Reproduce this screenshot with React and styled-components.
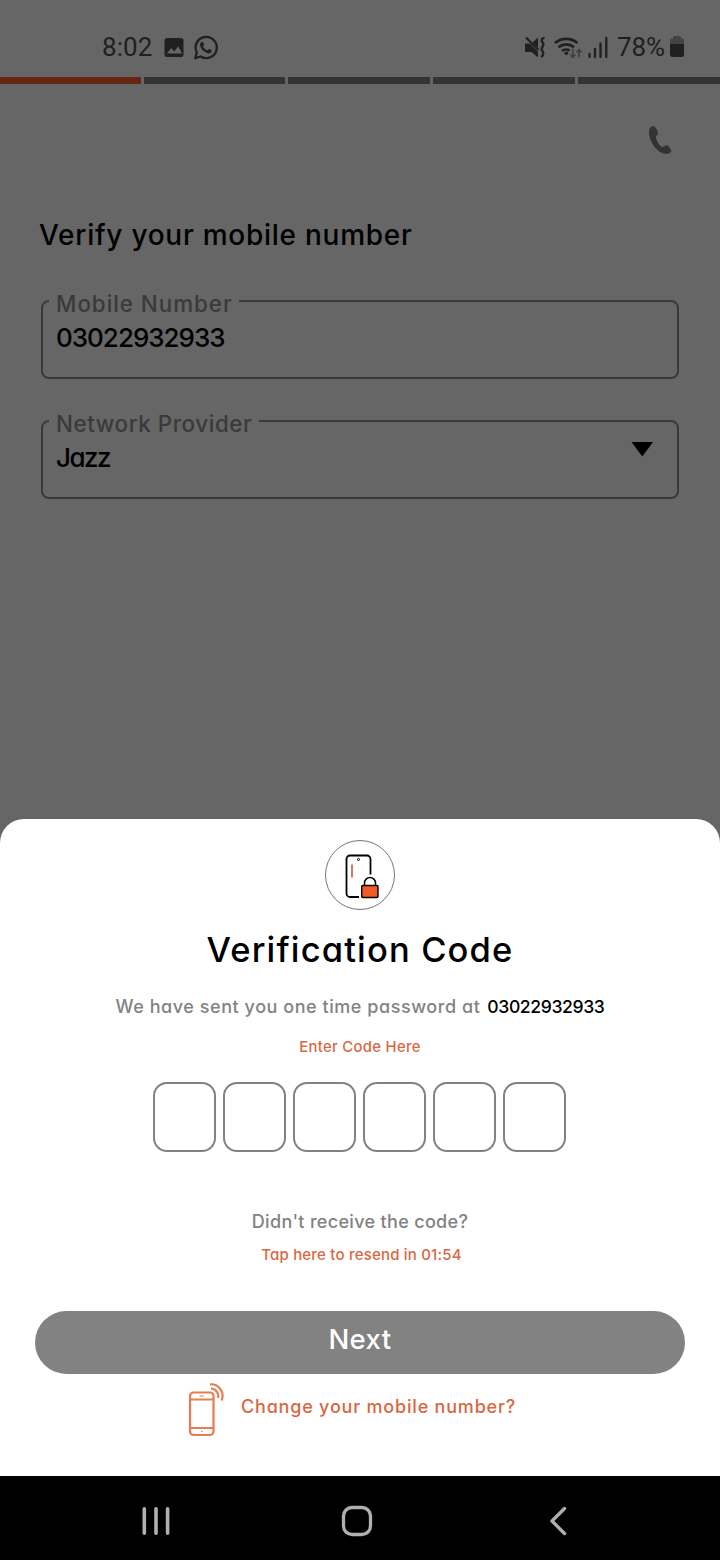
import React from "react";
import styled, { createGlobalStyle } from "styled-components";

const GlobalStyle = createGlobalStyle`
  * { box-sizing: border-box; }
  body { margin: 0; background: #666; }
`;

const Screen = styled.div`
  display: flex;
  flex-direction: column;
  width: 720px;
  height: 1560px;
  overflow: hidden;
  background: #666;
  font-family: Inter, "Open Sans", sans-serif;
  font-feature-settings: "cv11";
  font-weight: 500;
`;

const Text = styled.span`
  display: block;
  white-space: nowrap;
  color: ${(p) => p.$color || "#000"};
  font-size: ${(p) => p.$size}px;
  line-height: ${(p) => p.$line || 24}px;
  letter-spacing: ${(p) => p.$track || 0}px;
  font-weight: ${(p) => p.$weight || 500};
`;

const StatusBar = styled.header`
  display: flex;
  justify-content: space-between;
  align-items: center;
  height: 77px;
  padding: 17px 35px 0 102px;
  color: #202020;
  font-family: Roboto, sans-serif;
  font-weight: 400;
  font-size: 26px;
  line-height: 30px;
`;

const StatusGroup = styled.div`
  display: flex;
  align-items: center;
`;

const Clock = styled.span`
  width: 62px;
  letter-spacing: 0.1px;
`;

const Percent = styled.span`
  width: 52px;
  margin-left: 9px;
  letter-spacing: -0.1px;
`;

const Progress = styled.div`
  display: grid;
  grid-template-columns: 141px 141px 142px 142px 142px;
  gap: 3px;
  height: 7px;
`;

const Segment = styled.div`
  background: ${(p) => (p.$active ? "#662611" : "#343434")};
`;

const Form = styled.main`
  display: flex;
  flex-direction: column;
  height: 735px;
  padding: 40px 41px 0;
`;

const CallRow = styled.div`
  display: flex;
  justify-content: flex-end;
  height: 32px;
  padding-right: 6px;
`;

const FormTitle = styled(Text)`
  margin: 61px 0 0 -2px;
`;

const Field = styled.div`
  position: relative;
  display: flex;
  justify-content: space-between;
  align-items: flex-start;
  height: 79px;
  margin-top: ${(p) => p.$gap}px;
  padding: 20px 24px 0 13px;
  border: 2px solid #3a3a3a;
  border-radius: 8px;
`;

const FieldLabel = styled.div`
  position: absolute;
  top: -10px;
  left: 6px;
  width: ${(p) => p.$width}px;
  padding-left: 7px;
  background: #666;
`;

const Sheet = styled.section`
  display: flex;
  flex-direction: column;
  align-items: center;
  height: 657px;
  padding-top: 21px;
  background: #fff;
  border-radius: 24px 24px 0 0;
`;

const Badge = styled.div`
  display: flex;
  width: 70px;
  height: 70px;
  border: 1px solid #777;
  border-radius: 50%;
`;

const Message = styled.div`
  display: flex;
  gap: 7px;
  margin-top: 25px;
`;

const CodeRow = styled.div`
  display: flex;
  gap: 7px;
  margin: 25px 1px 0 0;
`;

const CodeBox = styled.div`
  width: 63px;
  height: 70px;
  border: 2px solid #828282;
  border-radius: 14px;
`;

const NextButton = styled.button`
  display: flex;
  justify-content: center;
  width: 650px;
  height: 63px;
  margin-top: 46px;
  padding: 10px 0 0;
  border: 0;
  border-radius: 32px;
  background: #828282;
  font: inherit;
  font-feature-settings: inherit;
`;

const ChangeLink = styled.div`
  display: flex;
  gap: 16px;
  width: 534px;
  margin: 8px 0 0;
  padding-left: 94px;
`;

const NavBar = styled.nav`
  display: flex;
  align-items: center;
  justify-content: space-between;
  height: 84px;
  padding: 6px 150px 0 140px;
  background: #000;
`;

const HomeSvg = styled.svg`
  margin-right: 6px;
`;

const Spaced = styled.div`
  margin-top: ${(p) => p.$top}px;
  padding-left: ${(p) => p.$left || 0}px;
`;

const ORANGE = "#d9673f";
const GRAY = "#828282";

const StatusLeftIcons = () => (
  <svg width="56" height="28" viewBox="0 0 56 28" fill="none">
    <rect x="0.5" y="5" width="19" height="19" rx="2.5" fill="#202020" />
    <path d="M3 20.5 7.2 15l3 3.5 4-5.3 4 7.3Z" fill="#666" />
    <g transform="translate(-1 0)">
      <path d="M32.200 25.200 33.800 19.400A10.600 10.600 0 1 1 37.600 23.500Z" stroke="#202020" strokeWidth="2.300" strokeLinejoin="round" />
      <path d="M38 9.300c.7-.8 1.700-.8 2.100 0l1 2.300c.2.600-.8 1.500-1 1.900.9 1.900 2.400 3.200 4.300 4 .6-.5 1.200-1.700 1.900-1.400l2.300 1.200c.6.500-.1 2-.8 2.500-1.700 1.300-4.500.3-6.500-1.200-2.100-1.500-4-4-4.200-6-.1-1.200.2-2.400.9-3.300Z" fill="#202020" />
    </g>
  </svg>
);

const StatusRightIcons = () => (
  <svg width="84" height="28" viewBox="0 0 84 28" fill="none">
    <path d="M1 10.500h4.700l8.300 8.300v5.700L7.500 19H1Z" fill="#202020" />
    <path d="M8.500 9.500 14 4.500V15Z" fill="#202020" />
    <path d="M2 4.500 14.500 17" stroke="#202020" strokeWidth="2.200" />
    <path d="M20.500 5c-3 0-3.500 2.500-2 4.300s1.500 2.700 0 4.400-1.500 2.700 0 4.400.8 5.400-1.700 5.400" stroke="#202020" strokeWidth="2.300" />
    <path d="M31 10a17.500 17.500 0 0 1 22.500 0M34.500 14.200a12 12 0 0 1 15.500 0M38 18a7 7 0 0 1 7.500-.5" stroke="#202020" strokeWidth="2.600" />
    <circle cx="42.300" cy="20.300" r="1.800" fill="#202020" />
    <path d="M48.800 16v8M46.300 21.500l2.500 3 2.500-3M55 24.500v-8M52.500 19.500l2.500-3 2.500 3" stroke="#404040" strokeWidth="1.700" />
    <path d="M65.500 21V24M71 16V24M76.500 10.500V24M82.300 5V24" stroke="#202020" strokeWidth="2.300" strokeLinecap="round" />
  </svg>
);

const BatteryIcon = () => (
  <svg width="16" height="24" viewBox="0 0 16 24">
    <path d="M5 1h6a1 1 0 0 1 1 1v1.500h1.500A1.500 1.500 0 0 1 15 5v5H1V5a1.500 1.500 0 0 1 1.500-1.500H4V2a1 1 0 0 1 1-1Z" fill="#434343" />
    <path d="M1 9h14v10.500a2.500 2.500 0 0 1-2.500 2.500h-9A2.500 2.500 0 0 1 1 19.500Z" fill="#202020" />
  </svg>
);

const CallIcon = () => (
  <svg width="26" height="32" viewBox="0 0 26 32">
    <path d="M5.200 2.200C3 3.100 2 5 2 8c0 9.500 8 21.500 17.500 22 2.700.1 4.800-1.200 4.800-3.200 0-1.300-2.700-5.400-4.700-5.500-1.900 0-2.700 1.900-4.300 1.700C12.900 22.700 9.300 16.400 8.900 13.500c-.2-1.700 2.200-2.300 2.100-4-.1-1.900-2-8-5.800-7.300Z" fill="#333" />
  </svg>
);

const LockPhoneIcon = () => (
  <svg width="68" height="68" viewBox="0 0 68 68" fill="none">
    <path d="M44.500 33.500V18a3.500 3.500 0 0 0-3.500-3.500H24a3.500 3.500 0 0 0-3.500 3.500v34.500A3.500 3.500 0 0 0 24 56h9" stroke="#000" strokeWidth="1.800" />
    <circle cx="32.500" cy="18.500" r="1" stroke="#000" />
    <path d="M26 23.500v13" stroke="#d5724c" strokeWidth="1.900" />
    <path d="M38.500 44.500v-2.500a5.500 5.500 0 0 1 11 0v2.500" stroke="#000" strokeWidth="1.500" />
    <rect x="35.700" y="44.500" width="16.300" height="12" rx="1" fill="#f15a24" stroke="#000" strokeWidth="1.400" />
  </svg>
);

const MobileSignalIcon = () => (
  <svg width="38" height="56" viewBox="0 0 38 56" fill="none" stroke="#e87b53" strokeWidth="2.200">
    <rect x="3" y="10.500" width="23.500" height="42.500" rx="3.500" />
    <path d="M3 17.500h23.500M3 46h23.500" />
    <path d="M12.500 14h4.500M14 49.500h1.500" strokeWidth="1.200" />
    <path d="M24 6.500a7.500 7.500 0 0 1 7 9.500M23 2.300a11.500 11.500 0 0 1 11.500 16.200" />
  </svg>
);

const RecentsIcon = () => (
  <svg width="32" height="32" viewBox="0 0 32 32" stroke="#b0b0b0" strokeWidth="3.600" strokeLinecap="round">
    <path d="M4.300 3.700v24.500M16 3.700v24.500M27.600 3.700v24.500" />
  </svg>
);

const HomeIcon = () => (
  <HomeSvg width="34" height="34" viewBox="0 0 34 34" fill="none" stroke="#b0b0b0" strokeWidth="3.300">
    <rect x="3.500" y="3.500" width="27" height="27" rx="8.500" />
  </HomeSvg>
);

const BackIcon = () => (
  <svg width="22" height="32" viewBox="0 0 22 32" fill="none" stroke="#b0b0b0" strokeWidth="3.300" strokeLinecap="round" strokeLinejoin="round">
    <path d="M16.500 3.500 4 16l12.500 12.500" />
  </svg>
);

export default function App() {
  return (
    <Screen>
      <GlobalStyle />
      <StatusBar>
        <StatusGroup>
          <Clock>8:02</Clock>
          <StatusLeftIcons />
        </StatusGroup>
        <StatusGroup>
          <StatusRightIcons />
          <Percent>78%</Percent>
          <BatteryIcon />
        </StatusGroup>
      </StatusBar>
      <Progress>
        {[0, 1, 2, 3, 4].map((i) => (
          <Segment key={i} $active={i === 0} />
        ))}
      </Progress>
      <Form>
        <CallRow>
          <CallIcon />
        </CallRow>
        <FormTitle $size={28} $line={36} $track={0.74}>Verify your mobile number</FormTitle>
        <Field $gap={47}>
          <FieldLabel $width={190}>
            <Text $size={22.4} $track={0.95} $color="#3a3a3a">Mobile Number</Text>
          </FieldLabel>
          <Text $size={26} $line={32} $track={-1}>03022932933</Text>
        </Field>
        <Field $gap={41}>
          <FieldLabel $width={210}>
            <Text $size={22.4} $track={0.57} $color="#3a3a3a">Network Provider</Text>
          </FieldLabel>
          <Text $size={26} $line={32} $track={-1.5}>Jazz</Text>
          <svg width="22" height="15" viewBox="0 0 22 15">
            <path d="M0.500 0H22L11.300 14.500Z" />
          </svg>
        </Field>
      </Form>
      <Sheet>
        <Badge>
          <LockPhoneIcon />
        </Badge>
        <Spaced $top={18}>
          <Text $size={34.5} $line={44} $track={1.15}>Verification Code</Text>
        </Spaced>
        <Message>
          <Text $size={18} $line={20} $track={0.55} $color={GRAY}>We have sent you one time password at</Text>
          <Text $size={17.6} $line={20} $track={-0.4}>03022932933</Text>
        </Message>
        <Spaced $top={20}>
          <Text $size={14.8} $line={20} $track={0.35} $color={ORANGE}>Enter Code Here</Text>
        </Spaced>
        <CodeRow>
          {[0, 1, 2, 3, 4, 5].map((i) => (
            <CodeBox key={i} />
          ))}
        </CodeRow>
        <Spaced $top={60}>
          <Text $size={18} $line={20} $track={0.32} $color={GRAY}>Didn't receive the code?</Text>
        </Spaced>
        <Spaced $top={13} $left={3}>
          <Text $size={15} $line={20} $track={0.2} $color={ORANGE}>Tap here to resend in 01:54</Text>
        </Spaced>
        <NextButton>
          <Text $size={27.5} $line={36} $track={0.4} $color="#fff">Next</Text>
        </NextButton>
        <ChangeLink>
          <MobileSignalIcon />
          <Spaced $top={15}>
            <Text $size={18} $line={20} $track={0.8} $color={ORANGE}>Change your mobile number?</Text>
          </Spaced>
        </ChangeLink>
      </Sheet>
      <NavBar>
        <RecentsIcon />
        <HomeIcon />
        <BackIcon />
      </NavBar>
    </Screen>
  );
}
